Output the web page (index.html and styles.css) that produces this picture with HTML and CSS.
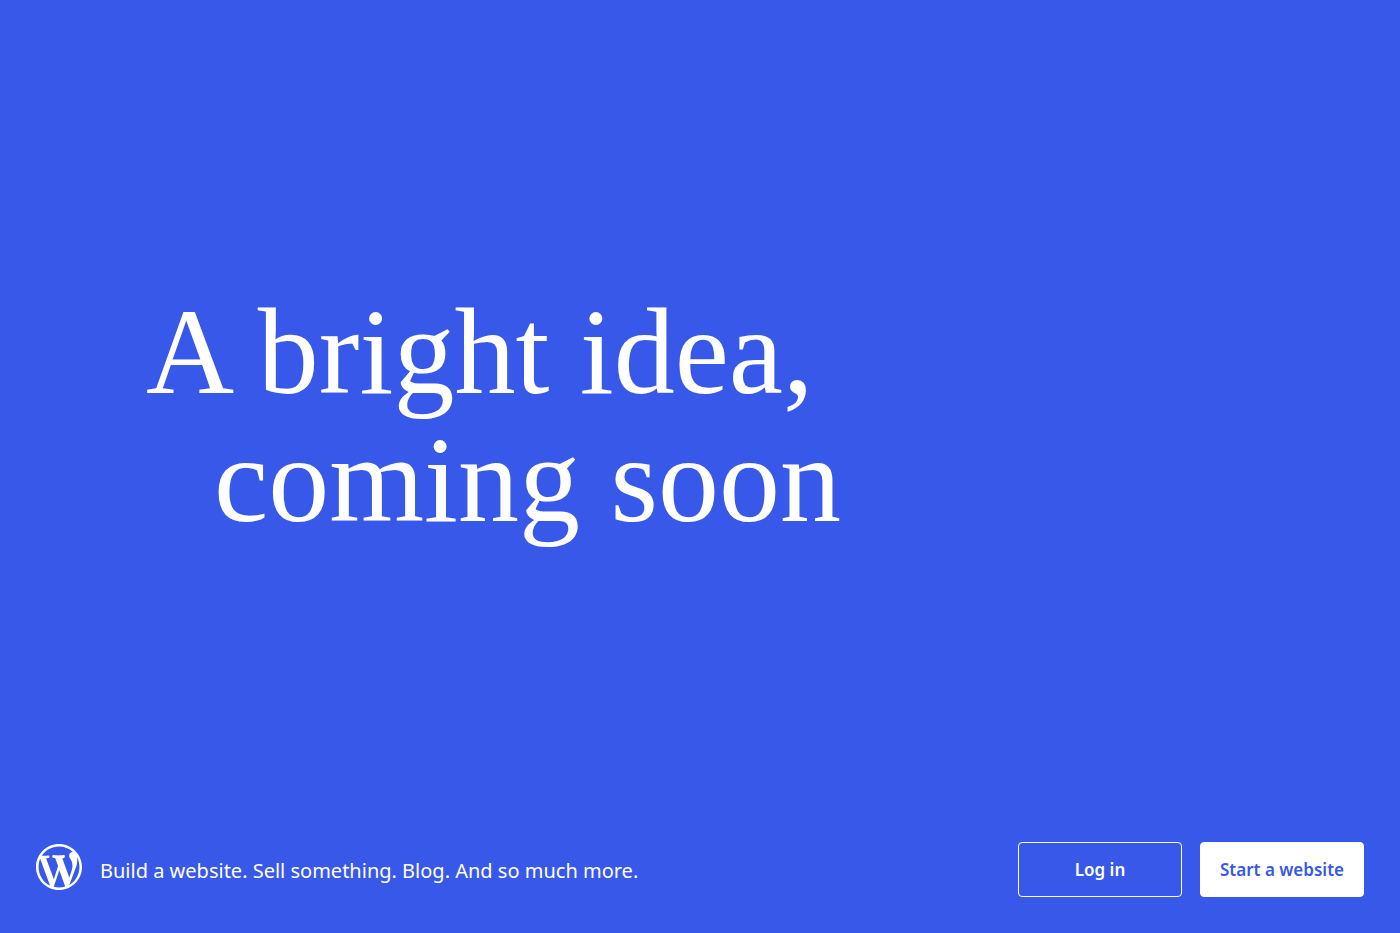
FILE: index.html
```html
<!DOCTYPE html>
<html lang="en">
<head>
<meta charset="utf-8">
<meta name="viewport" content="width=device-width, initial-scale=1">
<title>Coming soon</title>
<link rel="stylesheet" href="styles.css">
</head>
<body class="page">
<main class="hero">
<h1 class="headline"><span class="line">A bright idea,</span><span class="line line-indent">coming soon</span></h1>
</main>
<footer class="bar">
<div class="brand">
<svg class="logo" viewBox="0 0 20 20" role="img" aria-label="WordPress"><path fill="currentColor" fill-rule="evenodd" d="M20 10c0-5.51-4.49-10-10-10C4.48 0 0 4.49 0 10c0 5.52 4.48 10 10 10 5.51 0 10-4.48 10-10zM7.78 15.37L4.37 6.22c.55-.02 1.17-.08 1.17-.08.5-.06.44-1.13-.06-1.11 0 0-1.45.11-2.37.11-.18 0-.37 0-.58-.01C4.12 2.69 6.87 1.11 10 1.11c2.33 0 4.45.87 6.05 2.34-.68-.11-1.65.39-1.65 1.58 0 .74.45 1.36.9 2.1.35.61.55 1.36.55 2.46 0 1.49-1.4 5-1.4 5l-3.03-8.37c.54-.02.82-.17.82-.17.5-.05.44-1.25-.06-1.22 0 0-1.44.12-2.38.12-.87 0-2.33-.12-2.33-.12-.5-.03-.56 1.2-.06 1.22l.92.08 1.26 3.41zM17.41 10c.24-.64.74-1.87.43-4.25.7 1.29 1.05 2.71 1.05 4.25 0 3.29-1.73 6.24-4.4 7.78.97-2.59 1.94-5.2 2.92-7.78zM6.1 18.09C3.12 16.65 1.11 13.53 1.11 10c0-1.3.23-2.48.72-3.59C3.25 10.3 4.67 14.2 6.1 18.09zm4.03-6.63l2.58 6.98c-.86.29-1.76.45-2.71.45-.79 0-1.57-.11-2.29-.33.81-2.38 1.62-4.74 2.42-7.1z"/></svg>
<p class="tagline">Build a website. Sell something. Blog. And so much more.</p>
</div>
<nav class="actions" aria-label="Account">
<a class="button" href="#">Log in</a>
<a class="button button-primary" href="#">Start a website</a>
</nav>
</footer>
</body>
</html>
```
FILE: styles.css
```css
* { box-sizing: border-box; }
.page {
  margin: 0;
  min-height: 100vh;
  display: flex;
  flex-direction: column;
  background: #3858e9;
  color: #fff;
  font-family: "Segoe UI", "Noto Sans", "Open Sans", sans-serif;
}
.hero {
  flex: 1;
  display: flex;
  align-items: center;
  padding: 0 36px 10px 146px;
}
.headline {
  margin: 0;
  font-family: Recoleta, "Liberation Serif", serif;
  font-size: 122px;
  line-height: 128px;
  font-weight: 400;
}
.line { display: block; white-space: nowrap; }
.line-indent { padding-left: 68px; }
.bar {
  display: flex;
  align-items: center;
  justify-content: space-between;
  gap: 18px;
  padding: 0 36px 36px;
}
.brand { display: flex; align-items: center; gap: 18px; }
.logo { width: 46px; height: 46px; flex: none; margin-bottom: 6px; }
.tagline { margin: 0; padding-top: 2px; font-size: 20px; line-height: 32px; }
.actions { display: flex; gap: 18px; }
.button {
  width: 164px;
  height: 55px;
  display: flex;
  align-items: center;
  justify-content: center;
  border: 1px solid #fff;
  border-radius: 4px;
  color: #fff;
  font-size: 17px;
  font-weight: 600;
  text-decoration: none;
  white-space: nowrap;
}
.button-primary { background: #fff; color: #3858e9; }
```
